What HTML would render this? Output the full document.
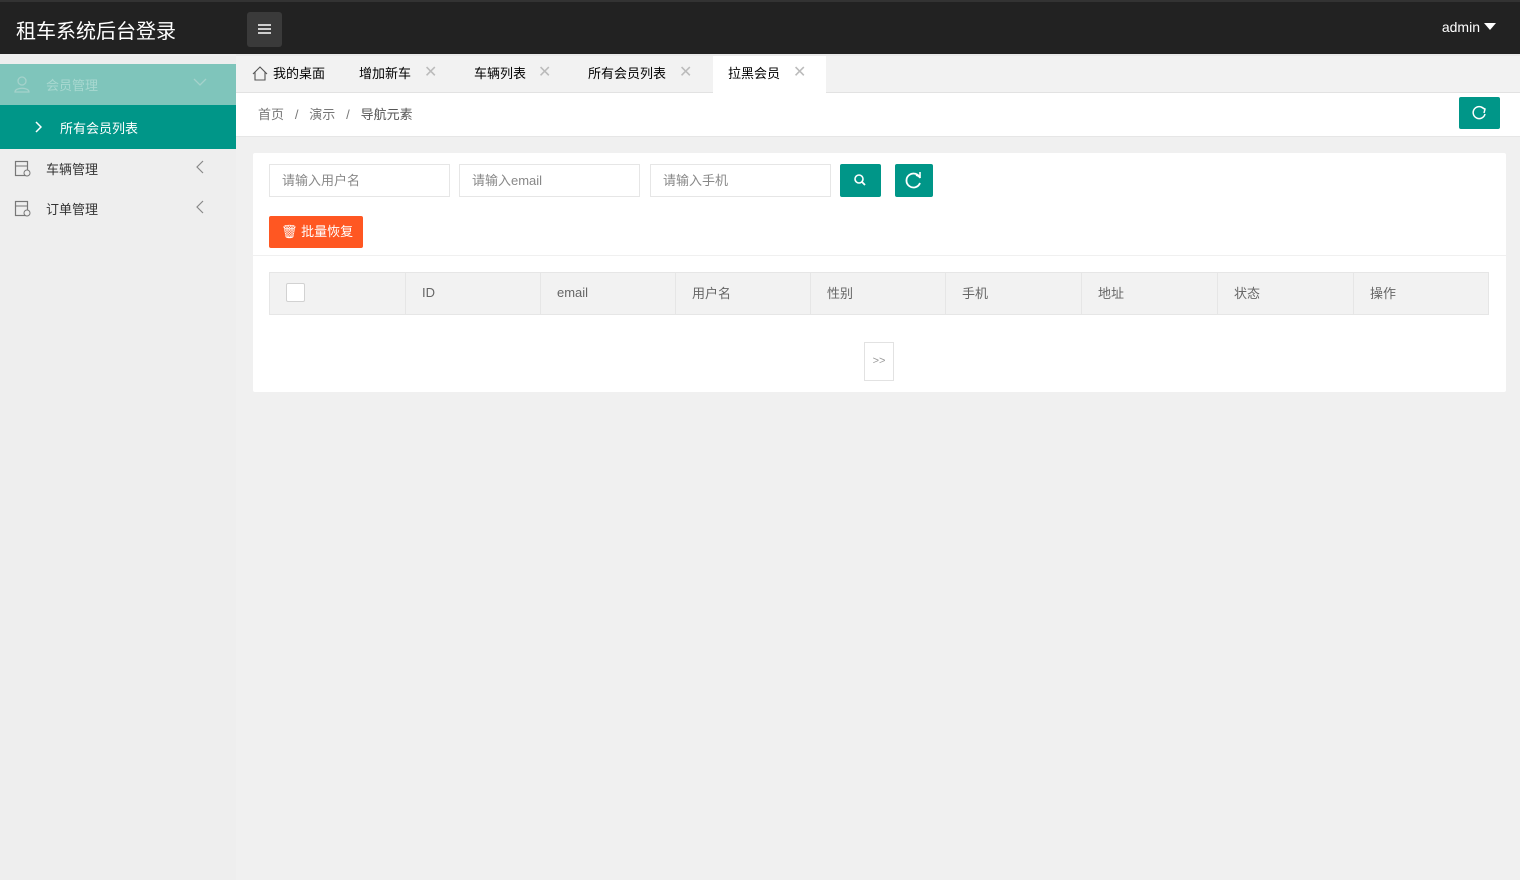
<!DOCTYPE html>
<html><head><meta charset="utf-8"><style>
*{margin:0;padding:0;box-sizing:border-box}
body{width:1520px;height:880px;background:#f0f0f0;font-family:"Liberation Sans","Noto Sans CJK SC",sans-serif;font-size:14px;color:#333;position:relative;overflow:hidden}
.top{position:absolute;left:0;top:0;width:1520px;height:54px;background:#222;border-top:2px solid #333}
.logo{position:absolute;left:16px;top:13px;color:#fff;font-size:20px}
.menu{position:absolute;left:247px;top:10px;width:35px;height:35px;background:#3a3a3a;border-radius:3px}
.admin{position:absolute;right:40px;top:17px;color:#fff;font-size:14px}
.tri{position:absolute;right:24px;top:21px;border:6px solid transparent;border-top:7px solid #fff}
.side{position:absolute;left:0;top:54px;width:236px;height:826px;background:#eee}
.abs{position:absolute}
.tabs{position:absolute;left:236px;top:54px;width:1284px;height:39px;background:#f2f2f2;border-bottom:1px solid #e2e2e2;border-top:2px solid #eaeaea}
.tab{position:absolute;top:0;height:37px;line-height:35px;font-size:13px;color:#000}
.x{color:#bbb;font-size:16px;position:absolute}
.bc{position:absolute;left:236px;top:93px;width:1284px;height:44px;background:#fff;border-bottom:1px solid #e6e6e6;font-size:13px;color:#777}
.card{position:absolute;left:253px;top:153px;width:1253px;height:239px;background:#fff;border-radius:2px}
.inp{position:absolute;top:11px;width:181px;height:33px;border:1px solid #e6e6e6;color:#888;font-size:13px;line-height:31px;padding-left:12px}
table{table-layout:fixed}
th{background:#f2f2f2;border:1px solid #e6e6e6;font-weight:normal;text-align:left;padding-left:16px;height:42px;color:#666;font-size:13px;padding-bottom:2px}
</style></head><body>
<div class="top"><div class="logo">租车系统后台登录</div>
<div class="menu"><svg width="35" height="35"><g stroke="#fff" stroke-width="1.5"><line x1="11" y1="13" x2="24" y2="13"/><line x1="11" y1="17" x2="24" y2="17"/><line x1="11" y1="21" x2="24" y2="21"/></g></svg></div>
<div class="admin">admin</div><div class="tri"></div></div>
<div class="side">
<div class="abs" style="left:0;top:10px;width:236px;height:41px;background:#7fc5bb"></div>
<svg class="abs" style="left:13px;top:21px" width="18" height="18"><circle cx="9" cy="6" r="4" fill="none" stroke="#a5d2cb" stroke-width="1.3"/><path d="M2 17c0-5 14-5 14 0z" fill="none" stroke="#a5d2cb" stroke-width="1.3"/></svg>
<div class="abs" style="left:46px;top:21px;color:#a8d8d0;font-size:13px">会员管理</div>
<svg class="abs" style="left:193px;top:24px" width="14" height="9"><path d="M1 1l6 6 6-6" fill="none" stroke="#a5d2cb" stroke-width="1.3"/></svg>
<div class="abs" style="left:0;top:51px;width:236px;height:44px;background:#009688"></div>
<svg class="abs" style="left:34px;top:67px" width="8" height="12"><path d="M2 1l5 5-5 5" fill="none" stroke="#fff" stroke-width="1.5"/></svg>
<div class="abs" style="left:60px;top:64px;color:#fff;font-size:13px">所有会员列表</div>
<svg class="abs" style="left:14px;top:106px" width="18" height="18"><rect x="1.5" y="1.5" width="12" height="14" fill="none" stroke="#777" stroke-width="1.2"/><line x1="1.5" y1="6" x2="13.5" y2="6" stroke="#777"/><circle cx="13" cy="13" r="3" fill="#eee" stroke="#777"/></svg>
<div class="abs" style="left:46px;top:105px;font-size:13px">车辆管理</div>
<svg class="abs" style="left:196px;top:106px" width="9" height="14"><path d="M7 1L1 7l6 6" fill="none" stroke="#888" stroke-width="1.2"/></svg>
<svg class="abs" style="left:14px;top:146px" width="18" height="18"><rect x="1.5" y="1.5" width="12" height="14" fill="none" stroke="#777" stroke-width="1.2"/><line x1="1.5" y1="6" x2="13.5" y2="6" stroke="#777"/><circle cx="13" cy="13" r="3" fill="#eee" stroke="#777"/></svg>
<div class="abs" style="left:46px;top:145px;font-size:13px">订单管理</div>
<svg class="abs" style="left:196px;top:146px" width="9" height="14"><path d="M7 1L1 7l6 6" fill="none" stroke="#888" stroke-width="1.2"/></svg>
</div>
<div class="tabs">
<svg class="abs" style="left:16px;top:10px" width="16" height="15"><path d="M1 8L8 1l7 7M3 6v8h10V6" fill="none" stroke="#555" stroke-width="1.1"/></svg>
<div class="tab" style="left:37px">我的桌面</div>
<div class="tab" style="left:123px">增加新车</div><div class="x" style="left:188px;top:6px">✕</div>
<div class="tab" style="left:238px">车辆列表</div><div class="x" style="left:302px;top:6px">✕</div>
<div class="tab" style="left:352px">所有会员列表</div><div class="x" style="left:443px;top:6px">✕</div>
<div class="tab" style="left:477px;width:113px;background:#fff;padding-left:15px;height:37px">拉黑会员</div><div class="x" style="left:557px;top:6px">✕</div>
</div>
<div class="bc"><span class="abs" style="left:22px;top:11px">首页 &nbsp;&nbsp;/&nbsp;&nbsp; 演示 &nbsp;&nbsp;/&nbsp;&nbsp; <span style="color:#555">导航元素</span></span>
<div class="abs" style="left:1223px;top:4px;width:41px;height:32px;background:#009688;border-radius:2px"><svg width="41" height="32"><path d="M25 12a6 6 0 1 0 1 5" fill="none" stroke="#fff" stroke-width="1.5"/><path d="M22 10l4 2-1 4" fill="none" stroke="#fff" stroke-width="1.5"/></svg></div></div>
<div class="card">
<div class="inp" style="left:16px">请输入用户名</div>
<div class="inp" style="left:206px">请输入email</div>
<div class="inp" style="left:397px">请输入手机</div>
<div class="abs" style="left:587px;top:11px;width:41px;height:33px;background:#009688;border-radius:2px"><svg width="41" height="33"><circle cx="19" cy="15" r="4" fill="none" stroke="#fff" stroke-width="1.6"/><line x1="22" y1="18" x2="25" y2="21" stroke="#fff" stroke-width="1.8"/></svg></div>
<div class="abs" style="left:642px;top:11px;width:38px;height:33px;background:#009688;border-radius:2px"><svg width="38" height="33"><path d="M25 14a7 7 0 1 0 0 5" fill="none" stroke="#fff" stroke-width="1.8"/><path d="M21 11l4 2 0-5" fill="none" stroke="#fff" stroke-width="1.6"/></svg></div>
<div class="abs" style="left:16px;top:63px;width:94px;height:32px;background:#ff5722;border-radius:2px;color:#fff;font-size:13px;line-height:31px;padding-left:12px">🗑︎ 批量恢复</div>
<div class="abs" style="left:0;top:102px;width:1253px;height:1px;background:#f0f0f0"></div>
<table class="abs" style="left:16px;top:119px;width:1220px;border-collapse:collapse">
<colgroup><col style="width:136px"><col style="width:135px"><col style="width:135px"><col style="width:135px"><col style="width:135px"><col style="width:136px"><col style="width:136px"><col style="width:136px"><col></colgroup>
<tr><th><div style="width:19px;height:19px;border:1px solid #d2d2d2;background:#fff;border-radius:2px"></div></th><th>ID</th><th>email</th><th>用户名</th><th>性别</th><th>手机</th><th>地址</th><th>状态</th><th>操作</th></tr></table>
<div class="abs" style="left:611px;top:189px;width:30px;height:39px;border:1px solid #e2e2e2;font-size:11px;color:#999;text-align:center;line-height:37px">&gt;&gt;</div>
</div>
</body></html>
